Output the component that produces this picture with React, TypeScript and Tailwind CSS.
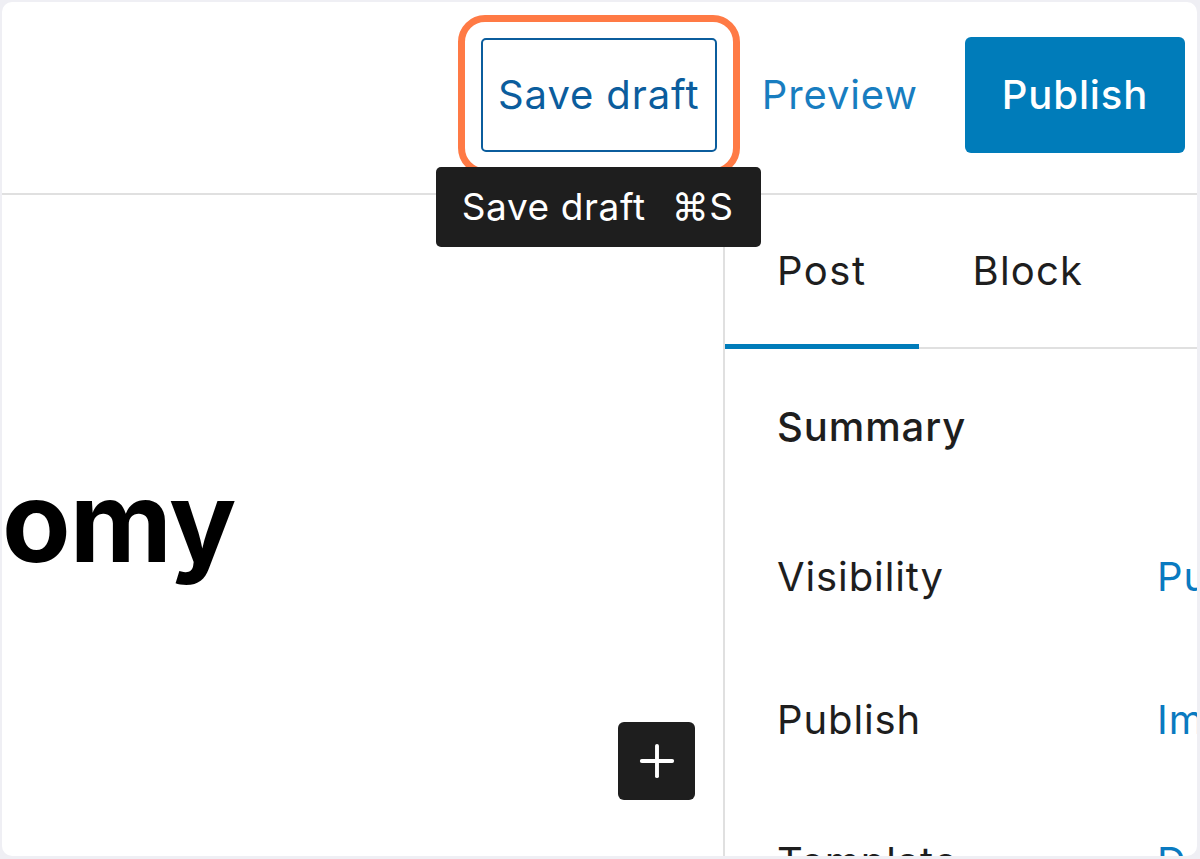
import { Plus } from "lucide-react";

const font = "font-['Inter','DejaVu_Sans',sans-serif]";

const rows = [
  { label: "Visibility", value: "Public", gap: "mt-[102px]" },
  { label: "Publish", value: "Immediately", gap: "mt-[95px]" },
  { label: "Template", value: "Default", gap: "mt-[94px]" },
];

export default function App() {
  return (
    <div className={`h-[859px] w-[1200px] bg-[#efeff4] pt-[2px] pl-[2px] pr-[3px] pb-[3px] ${font}`}>
      <div className="flex h-full flex-col overflow-hidden rounded-[10px] bg-white">
        <header className="flex h-[193px] shrink-0 items-center justify-end border-b-2 border-[#e0e0e0] pr-[12px] pb-[6px] tracking-[0.9px]">
          <div className="relative">
            <div className="absolute -inset-[23px] rounded-[27px] border-[7px] border-[#ff7a45]" />
            <button
              type="button"
              className="flex h-[114px] w-[236px] items-center justify-center rounded-[5px] border-2 border-[#0b5d9d] text-[40px] text-[#0b5d9d]"
            >
              Save draft
            </button>
            <div className="absolute top-[129px] left-[-45px] z-20 flex h-[80px] w-[325px] items-center rounded-[5px] bg-[#1e1e1e] pl-[26px] text-[37px] tracking-[0.6px] text-white">
              <span>Save draft</span>
              <span className="ml-[26px]">⌘S</span>
            </div>
          </div>
          <span className="ml-[45px] text-[40px] text-[#187dc0]">Preview</span>
          <button
            type="button"
            className="ml-[47px] flex h-[116px] w-[220px] items-center justify-center rounded-[6px] bg-[#007cba] text-[40px] font-medium text-white"
          >
            Publish
          </button>
        </header>

        <main className="flex min-h-0 flex-1">
          <div className="flex w-[721px] shrink-0 flex-col">
            <p className="mt-[270px] text-[112px] leading-none font-bold tracking-[-1px] text-black">omy</p>
            <div className="mt-[145px] flex justify-end pr-[28px]">
              <button
                type="button"
                className="flex h-[78px] w-[77px] items-center justify-center rounded-[6px] bg-[#1e1e1e] text-white"
                aria-label="Add block"
              >
                <Plus className="h-[52px] w-[52px]" strokeWidth={1.8} />
              </button>
            </div>
          </div>

          <aside className="flex min-w-0 flex-1 flex-col border-l-2 border-[#e0e0e0] tracking-[0.9px] text-[#1e1e1e]">
            <div className="flex h-[154px] shrink-0 border-b-2 border-[#e0e0e0]">
              <div className="relative flex items-center px-[52px] text-[40px] tracking-[1.5px]">
                Post
                <span className="absolute right-0 bottom-[-2px] left-0 h-[5px] bg-[#007cba]" />
              </div>
              <div className="flex items-center px-[54px] text-[40px] tracking-[1.2px]">Block</div>
            </div>
            <div className="flex flex-col pl-[52px] text-[40px] leading-[48px]">
              <p className="mt-[54px] font-medium">Summary</p>
              {rows.map((row) => (
                <div key={row.label} className={`flex whitespace-nowrap ${row.gap}`}>
                  <span className="w-[380px] shrink-0">{row.label}</span>
                  <span className="text-[#0a7ac0]">{row.value}</span>
                </div>
              ))}
            </div>
          </aside>
        </main>
      </div>
    </div>
  );
}
